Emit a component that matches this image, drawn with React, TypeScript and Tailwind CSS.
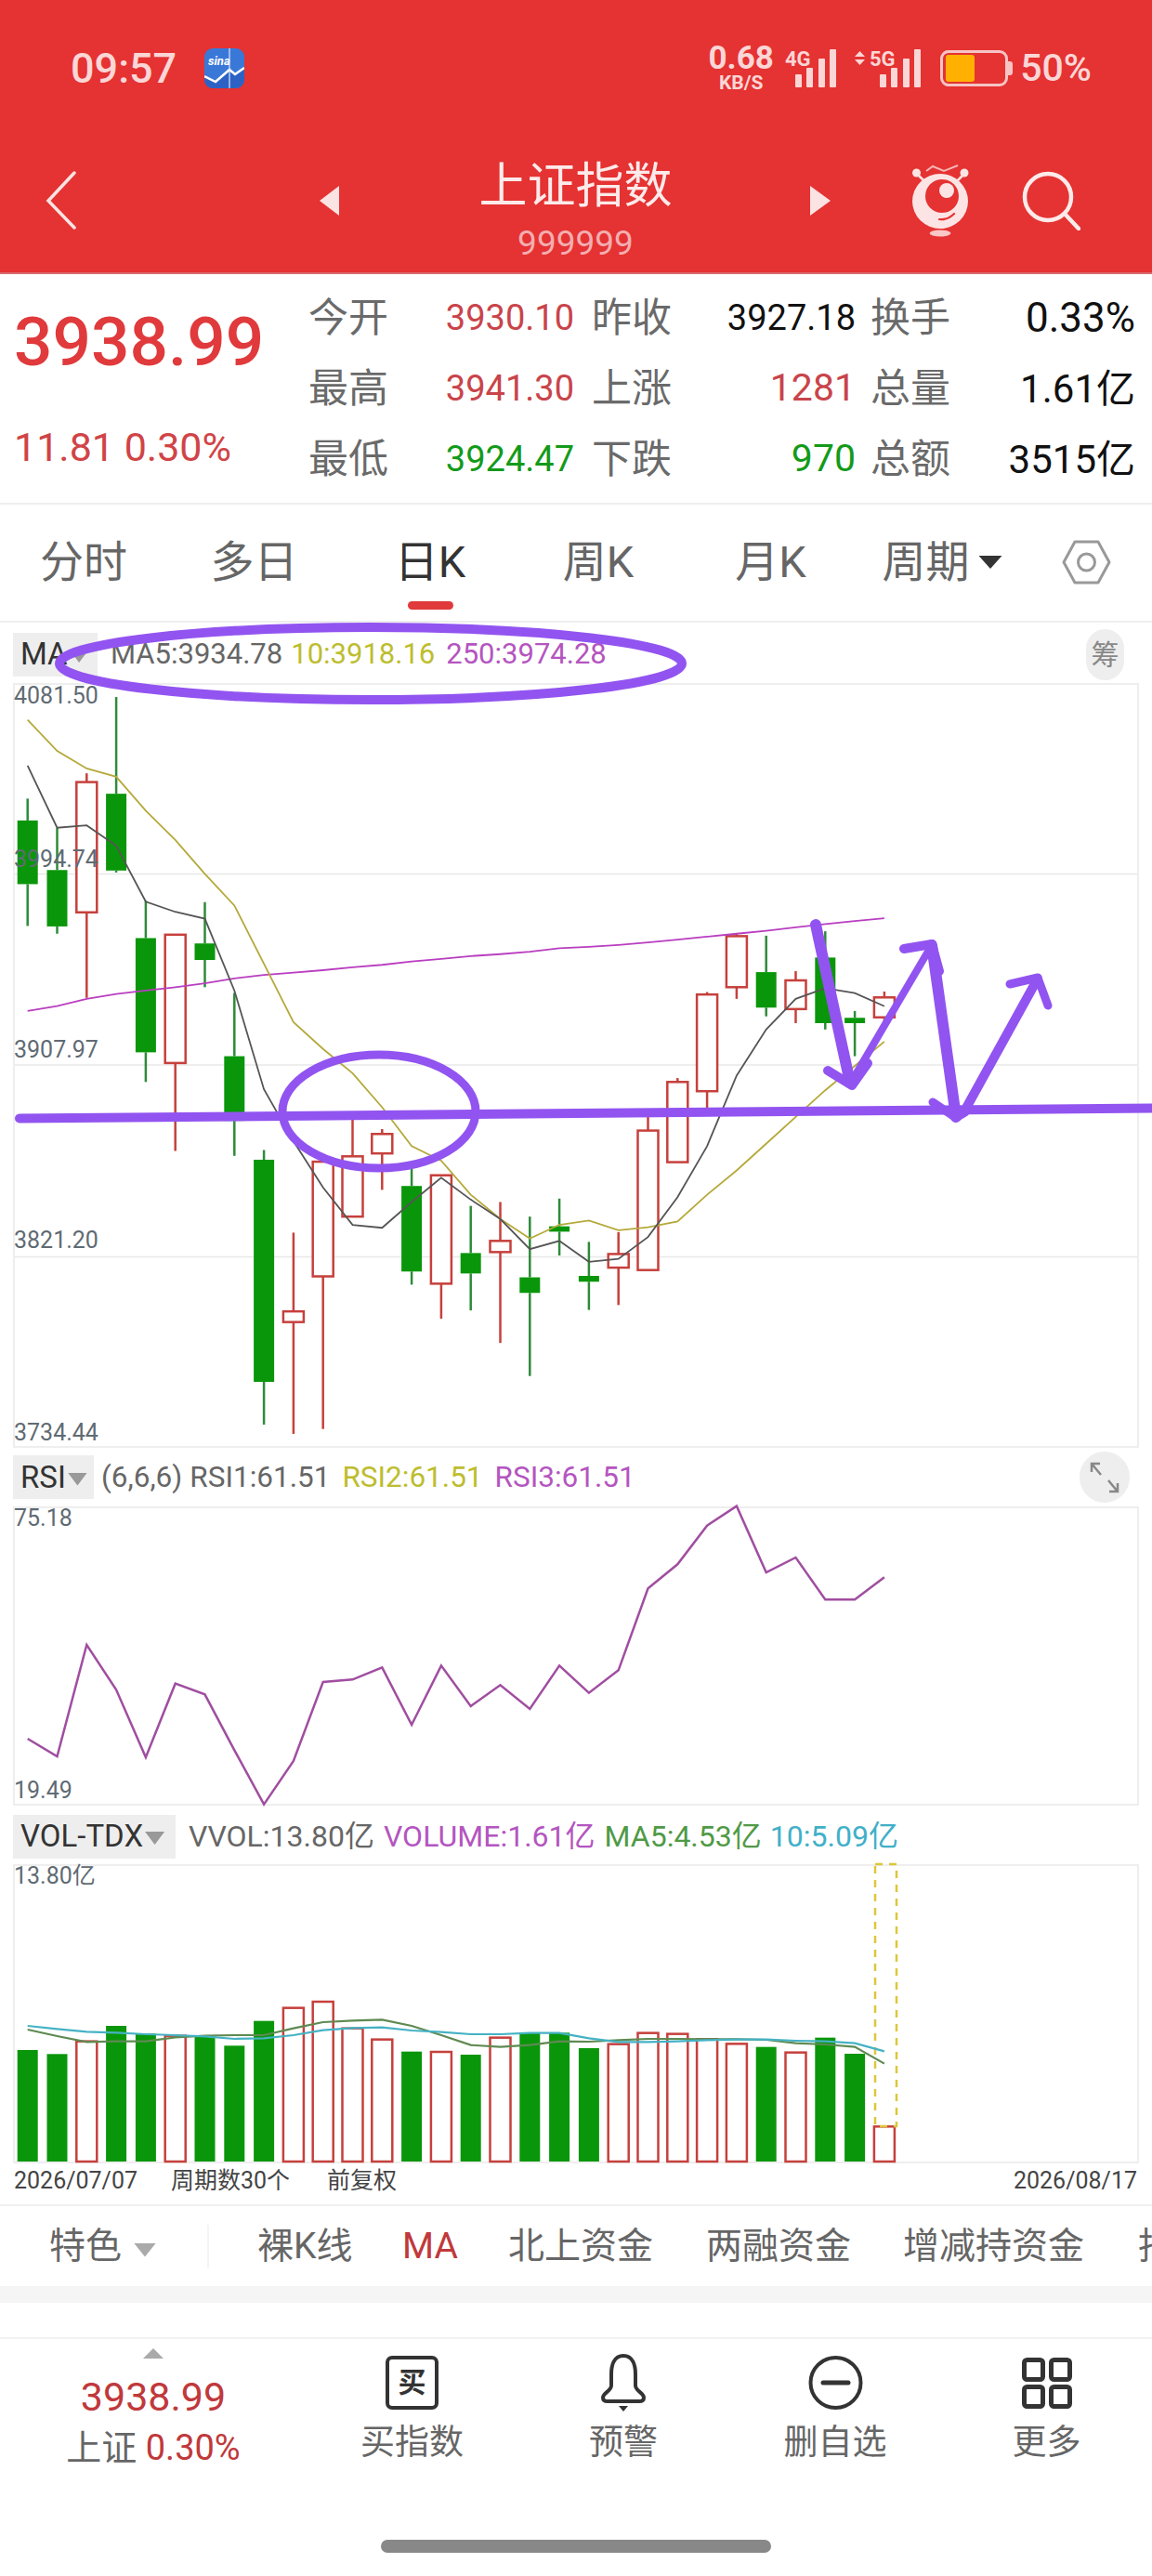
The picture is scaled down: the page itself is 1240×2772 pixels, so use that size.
import React from "react";

const GREEN = "#0a960a";
const RED = "#c6403c";
const cx = (i: number) => 29.7 + 31.8 * i;
const ky = (z: number) => 760 + z / 1.912;
const ry = (z: number) => 1560 + z / 3;
const vy = (z: number) => 1960 + z / 3;

const candles: [number, number, number, number, number][] = [
  [0, 190, 235, 366, 452], [0, 250, 337, 453, 468], [1, 138, 156, 424, 600], [0, -19, 180, 338, 342],
  [0, 400, 477, 712, 773], [1, 470, 470, 734, 915], [0, 403, 488, 522, 578], [0, 590, 720, 853, 925],
  [0, 913, 933, 1390, 1478], [1, 1083, 1245, 1267, 1497], [1, 937, 937, 1173, 1487], [1, 848, 926, 1050, 1050],
  [1, 870, 880, 920, 995], [0, 950, 987, 1163, 1190], [1, 965, 965, 1188, 1260], [0, 1028, 1125, 1167, 1243],
  [1, 1020, 1100, 1123, 1310], [0, 1050, 1175, 1207, 1378], [0, 1013, 1070, 1081, 1130], [0, 1102, 1172, 1184, 1242],
  [1, 1082, 1127, 1155, 1232], [1, 845, 873, 1160, 1160], [1, 765, 773, 938, 938], [1, 588, 593, 792, 830],
  [1, 468, 473, 578, 602], [0, 472, 547, 620, 638], [1, 545, 564, 623, 652], [0, 463, 517, 652, 665],
  [0, 627, 641, 652, 720], [1, 587, 599, 640, 666],
];
const ma5 = [122, 250, 245, 287, 402, 423, 437, 585, 788, 895, 990, 1067, 1073, 1020, 970, 1015, 1055, 1117, 1100, 1143, 1137, 1092, 1010, 905, 760, 665, 602, 580, 590, 617];
const ma10 = [28, 92, 128, 145, 215, 275, 345, 410, 530, 650, 705, 755, 825, 905, 935, 1005, 1055, 1095, 1067, 1058, 1078, 1072, 1060, 1005, 955, 900, 845, 790, 740, 690];
const ma250 = [627, 617, 602, 592, 585, 578, 570, 560, 553, 548, 543, 537, 532, 525, 520, 514, 510, 505, 498, 495, 491, 486, 480, 474, 468, 462, 455, 448, 442, 436];
const rsi = [933, 990, 630, 775, 993, 755, 790, 970, 1145, 1005, 750, 742, 703, 888, 697, 828, 760, 837, 697, 785, 712, 448, 370, 245, 182, 396, 348, 484, 484, 412];
const bars: [number, number][] = [
  [0, 738], [0, 751], [1, 710], [0, 660], [0, 685], [1, 692], [0, 690], [0, 724], [0, 644], [1, 602],
  [1, 582], [1, 668], [1, 704], [0, 743], [1, 744], [0, 753], [1, 698], [0, 684], [0, 682], [0, 732],
  [1, 719], [1, 683], [1, 686], [1, 703], [1, 718], [0, 728], [1, 746], [0, 698], [0, 750], [1, 985],
];
const volG = [672, 693, 712, 710, 710, 697, 692, 690, 690, 668, 648, 643, 640, 660, 690, 722, 728, 722, 710, 711, 706, 702, 702, 703, 703, 705, 716, 720, 728, 782];
const volB = [660, 670, 679, 682, 687, 690, 694, 702, 700, 690, 674, 667, 665, 675, 680, 687, 687, 683, 683, 700, 712, 712, 710, 706, 704, 704, 708, 710, 716, 742];

const pts = (a: number[], f: (z: number) => number) => a.map((z, i) => `${cx(i)},${f(z)}`).join(" ");

function Tri({ className }: { className: string }) {
  return <div className={className} style={{ clipPath: "polygon(0 0,100% 0,50% 100%)" }} />;
}

function Quote({ label, value, color, pad, size }: { label: string; value: string; color: string; pad?: string; size?: string }) {
  return (
    <>
      <div className={`flex items-center text-[43px] text-[#6a6a6a] whitespace-nowrap ${pad ?? ""}`}>{label}</div>
      <div className={`flex items-center justify-end whitespace-nowrap ${size ?? "text-[38px]"} ${color}`}>{value}</div>
    </>
  );
}

function Signal({ label, arrows }: { label: string; arrows?: boolean }) {
  const ox = arrows ? 16 : 1;
  const bx = arrows ? 27 : 12;
  const w = arrows ? 71 : 56;
  return (
    <svg width={w} height="44" viewBox={`0 0 ${w} 44`} className="block">
      {arrows && <path d="M5.5 4 L11 10 L0 10 Z M0 13 L11 13 L5.5 19 Z" fill="#fbd6d6" />}
      <text x={ox} y="20" fontSize="22" fontWeight="700" fill="#fbd6d6" fontFamily="Roboto">{label}</text>
      {[[0, 29], [12, 22], [25, 12], [37, 2]].map(([x, y]) => (
        <rect key={x} x={x + bx} y={y} width="7" height={43 - y} fill="#fbd6d6" rx="1" />
      ))}
    </svg>
  );
}

function Dropdown({ label, width }: { label: string; width: string }) {
  return (
    <div className={`flex items-center justify-start pl-[8px] h-[47px] bg-[#eeeeee] flex-none text-[33px] text-[#333] whitespace-nowrap ${width}`}>
      <span>{label}</span>
      <Tri className="w-[21px] h-[14px] ml-[2px] mt-[4px] bg-[#999] flex-none" />
    </div>
  );
}

const chartBox = "relative ml-[14px] w-[1212px] border-2 border-[#eeeeee] bg-white";
const axis = "absolute left-[-1px] text-[25px] leading-[28px] text-[#5f6b73] whitespace-nowrap";

export default function App() {
  return (
    <div className="relative w-[1240px] h-[2772px] overflow-hidden bg-white [font-family:Roboto,'Noto_Sans_CJK_SC',sans-serif]">
      {/* Red header */}
      <header className="h-[295px] bg-[#e53232] border-b-2 border-[#d9696a]">
        <div className="h-[146px] flex items-center pl-[76px] pr-[65px] text-[#fbd6d6]">
          <span className="text-[45px] font-medium leading-none w-[116px]">09:57</span>
          <div className="relative ml-[28px] w-[43px] h-[43px] rounded-[9px] bg-[#3a78d8] overflow-hidden">
            <span className="absolute left-[4px] top-[7px] text-[13px] italic font-bold text-white leading-none">sina</span>
            <svg className="absolute inset-0" viewBox="0 0 43 43" width="43" height="43">
              <path d="M0 30 L12 36 L27 23 L33 28 L43 21 V43 H0 Z" fill="#2d62c4" />
              <polyline points="0,30 12,36 27,23 33,28 43,21" fill="none" stroke="#fff" strokeWidth="2.5" />
              <line x1="27" y1="0" x2="27" y2="43" stroke="#dfeaff" strokeWidth="1.2" />
            </svg>
          </div>
          <div className="ml-auto flex items-center">
            <div className="w-[69px] flex flex-col items-center font-bold">
              <span className="text-[35px] leading-[30px]">0.68</span>
              <span className="text-[21px] leading-[18px] mt-[2px]">KB/S</span>
            </div>
            <div className="ml-[12px]"><Signal label="4G" /></div>
            <div className="ml-[20px]"><Signal label="5G" arrows /></div>
            <div className="relative ml-[21px] w-[78px] h-[39px]">
              <div className="absolute left-0 top-0 w-[73px] h-[39px] rounded-[9px] border-[3px] border-[#f6c4c4]" />
              <div className="absolute right-0 top-[12px] w-[5px] h-[15px] rounded-r-[3px] bg-[#f6c4c4]" />
              <div className="absolute left-[6px] top-[5px] w-[31px] h-[29px] rounded-[3px] bg-[#ffb000]" />
            </div>
            <span className="ml-[8px] text-[41px] font-medium leading-none">50%</span>
          </div>
        </div>
        <div className="h-[147px] flex items-center pb-[8px] pl-[49px]">
          <svg width="33" height="63" viewBox="0 0 33 63" className="flex-none">
            <polyline points="31,2 3,32 31,61" fill="none" stroke="#fbe3e3" strokeWidth="3.5" strokeLinecap="round" />
          </svg>
          <svg width="21" height="32" viewBox="0 0 21 32" className="flex-none ml-[262px]"><path d="M21 0 V32 L0 16 Z" fill="#fbe3e3" /></svg>
          <div className="w-[507px] flex-none self-start pl-[2px] pt-[25px] text-center">
            <div className="text-[52px] leading-[60px] text-[#fdeaea]">上证指数</div>
            <div className="text-[37px] leading-[40px] mt-[11px] text-[#f3aeb0]">999999</div>
          </div>
          <svg width="22" height="32" viewBox="0 0 22 32" className="flex-none"><path d="M0 0 V32 L22 16 Z" fill="#fbe3e3" /></svg>
          <svg width="61" height="78" viewBox="0 0 61 78" className="flex-none ml-[88px]">
            <polyline points="15,7 22,2 34,7 49,1" fill="none" stroke="#f6b4b4" strokeWidth="2" />
            <circle cx="4.5" cy="9" r="4.5" fill="#fde4e4" />
            <circle cx="56" cy="9" r="4.5" fill="#fde4e4" />
            <path d="M6 11 L13 18 M55 11 L48 18" stroke="#fde4e4" strokeWidth="2.5" />
            <ellipse cx="30" cy="39.5" rx="30" ry="29.5" fill="#fde4e4" />
            <circle cx="32" cy="34" r="18" fill="#e53232" />
            <circle cx="37" cy="28" r="8" fill="#fde4e4" />
            <path d="M29 59 Q38 60 45 53" fill="none" stroke="#e53232" strokeWidth="2.2" strokeLinecap="round" />
            <ellipse cx="30" cy="74" rx="11.5" ry="3.5" fill="#fbc6c6" />
          </svg>
          <svg width="63" height="64" viewBox="0 0 63 64" className="flex-none ml-[57px]">
            <circle cx="28" cy="28" r="25" fill="none" stroke="#fdeaea" strokeWidth="4.5" />
            <line x1="46" y1="46" x2="61" y2="62" stroke="#fdeaea" strokeWidth="4.5" strokeLinecap="round" />
          </svg>
        </div>
      </header>

      {/* Quote panel */}
      <section className="h-[248px] border-b-2 border-[#eeeeee] flex">
        <div className="w-[332px] flex-none pl-[15px] pt-[33px]">
          <div className="text-[73px] leading-[80px] font-medium text-[#e03a3c] whitespace-nowrap">3938.99</div>
          <div className="mt-[52px] text-[43px] leading-[42px] text-[#d04447] whitespace-nowrap">11.81 0.30%</div>
        </div>
        <div className="mt-[9px] grid grid-cols-[87px_199px_106px_197px_103px_198px] auto-rows-[76px] self-start">
          <Quote label="今开" value="3930.10" color="text-[#c9444a]" />
          <Quote label="昨收" value="3927.18" color="text-[#111]" pad="pl-[19px]" />
          <Quote label="换手" value="0.33%" color="text-[#111]" pad="pl-[16px]" size="text-[44px]" />
          <Quote label="最高" value="3941.30" color="text-[#c9444a]" />
          <Quote label="上涨" value="1281" color="text-[#c9444a]" pad="pl-[19px]" size="text-[41px]" />
          <Quote label="总量" value="1.61亿" color="text-[#111]" pad="pl-[16px]" size="text-[42px]" />
          <Quote label="最低" value="3924.47" color="text-[#139a1a]" />
          <Quote label="下跌" value="970" color="text-[#139a1a]" pad="pl-[19px]" size="text-[41px]" />
          <Quote label="总额" value="3515亿" color="text-[#111]" pad="pl-[16px]" size="text-[42px]" />
        </div>
      </section>

      {/* Tabs */}
      <nav className="h-[127px] border-b-2 border-[#eeeeee] grid grid-cols-[180px_187px_192px_170px_201px_168px_142px] text-[47px] leading-[54px] text-[#666]">
        {["分时", "多日"].map((t) => (
          <div key={t} className="pt-[35px] text-center">{t}</div>
        ))}
        <div className="pt-[35px] flex flex-col items-center text-[#333]">
          <span className="h-[54px]">日K</span>
          <div className="mt-[15px] w-[49px] h-[9px] rounded-full bg-[#e03a3c]" />
        </div>
        <div className="pt-[35px] text-center">周K</div>
        <div className="pt-[35px] text-center">月K</div>
        <div className="pt-[35px] flex justify-center items-start">
          <span>周期</span>
          <Tri className="w-[25px] h-[14px] bg-[#333] ml-[10px] mt-[20px]" />
        </div>
        <div className="pt-[38px] flex justify-center items-start">
          <svg width="53" height="48" viewBox="0 0 53 48">
            <path d="M14 2 H39 L51 24 L39 46 H14 L2 24 Z" fill="none" stroke="#999" strokeWidth="3" strokeLinejoin="round" />
            <circle cx="26.5" cy="24" r="9" fill="none" stroke="#999" strokeWidth="3" />
          </svg>
        </div>
      </nav>

      {/* MA legend */}
      <div className="h-[65px] pt-[3px] pl-[14px] pr-[30px] flex items-center text-[31px] whitespace-nowrap">
        <Dropdown label="MA" width="w-[91px]" />
        <span className="ml-[14px] text-[#666]">MA5:3934.78</span>
        <span className="ml-[9px] text-[#bdbd2e]">10:3918.16</span>
        <span className="ml-[12px] text-[#b455c0]">250:3974.28</span>
        <div className="ml-auto w-[41px] h-[55px] rounded-full bg-[#eeeeee] flex items-center justify-center text-[30px] text-[#888]">筹</div>
      </div>

      {/* Candle chart */}
      <div className={`${chartBox} h-[823px]`}>
        <svg className="absolute inset-0 block overflow-visible" width="1208" height="819" viewBox="16 737 1208 819">
          {[940.4, 1146, 1352.6].map((y) => (
            <line key={y} x1="16" x2="1224" y1={y} y2={y} stroke="#e8e8e8" strokeWidth="1.5" />
          ))}
          {candles.map(([up, wt, bt, bb, wb], i) => {
            const x = cx(i);
            const col = up ? RED : "#2e8b3a";
            return (
              <g key={i}>
                <line x1={x} x2={x} y1={ky(wt)} y2={ky(bt)} stroke={col} strokeWidth="2.5" />
                <line x1={x} x2={x} y1={ky(bb)} y2={ky(wb)} stroke={col} strokeWidth="2.5" />
                {up ? (
                  <rect x={x - 11} y={ky(bt)} width="22" height={ky(bb) - ky(bt)} fill="#fff" stroke={RED} strokeWidth="2.5" />
                ) : (
                  <rect x={x - 11} y={ky(bt)} width="22" height={ky(bb) - ky(bt)} fill={GREEN} />
                )}
              </g>
            );
          })}
          <polyline points={pts(ma250, ky)} fill="none" stroke="#b93ec0" strokeWidth="1.8" />
          <polyline points={pts(ma10, ky)} fill="none" stroke="#b5a93a" strokeWidth="1.8" />
          <polyline points={pts(ma5, ky)} fill="none" stroke="#555" strokeWidth="1.8" />
        </svg>
        <span className={`${axis} top-[-2px]`}>4081.50</span>
        <span className={`${axis} top-[174px]`}>3994.74</span>
        <span className={`${axis} top-[379px]`}>3907.97</span>
        <span className={`${axis} top-[584px]`}>3821.20</span>
        <span className={`${axis} top-[791px]`}>3734.44</span>
      </div>

      {/* RSI legend */}
      <div className="h-[63px] pl-[14px] pr-[24px] flex items-center text-[31.5px] whitespace-nowrap">
        <Dropdown label="RSI" width="w-[87px]" />
        <span className="ml-[8px] text-[#666]">(6,6,6)</span>
        <span className="ml-[8px] text-[#666]">RSI1:61.51</span>
        <span className="ml-[13px] text-[#bdbd2e]">RSI2:61.51</span>
        <span className="ml-[13px] text-[#b455c0]">RSI3:61.51</span>
        <div className="ml-auto w-[54px] h-[55px] rounded-full bg-[#eeeeee] flex items-center justify-center">
          <svg width="34" height="36" viewBox="0 0 34 36" fill="none" stroke="#888" strokeWidth="2.5">
            <path d="M3 12 V3 H12 M3 3 L13 15 M31 24 V33 H22 M31 33 L21 21" />
          </svg>
        </div>
      </div>

      {/* RSI chart */}
      <div className={`${chartBox} h-[322px]`}>
        <svg className="absolute inset-0 block overflow-visible" width="1208" height="318" viewBox="16 1623 1208 318">
          <polyline points={pts(rsi, ry)} fill="none" stroke="#a04ea0" strokeWidth="2.5" />
        </svg>
        <span className={`${axis} top-[-3px]`}>75.18</span>
        <span className={`${axis} top-[290px]`}>19.49</span>
      </div>

      {/* VOL legend */}
      <div className="h-[63px] pt-[3px] pl-[14px] flex items-center text-[32px] whitespace-nowrap">
        <Dropdown label="VOL-TDX" width="w-[175px]" />
        <span className="ml-[14px] text-[#666]">VVOL:13.80亿</span>
        <span className="ml-[10px] text-[#b455c0]">VOLUME:1.61亿</span>
        <span className="ml-[10px] text-[#4f9a45]">MA5:4.53亿</span>
        <span className="ml-[9px] text-[#3fb0c8]">10:5.09亿</span>
      </div>

      {/* VOL chart */}
      <div className={`${chartBox} h-[322px]`}>
        <svg className="absolute inset-0 block overflow-visible" width="1208" height="318" viewBox="16 2008 1208 318">
          {bars.map(([up, top], i) => {
            const x = cx(i);
            return up ? (
              <rect key={i} x={x - 11} y={vy(top)} width="22" height={2326 - vy(top)} fill="#fff" stroke={RED} strokeWidth="2.5" />
            ) : (
              <rect key={i} x={x - 11} y={vy(top)} width="22" height={2326 - vy(top)} fill={GREEN} />
            );
          })}
          <rect x="942" y="2006" width="23" height="282" fill="none" stroke="#dcc73a" strokeWidth="2.5" strokeDasharray="8 7" />
          <polyline points={pts(volG, vy)} fill="none" stroke="#5e8a52" strokeWidth="2.2" />
          <polyline points={pts(volB, vy)} fill="none" stroke="#45b2c4" strokeWidth="2.2" />
        </svg>
        <span className={`${axis} top-[-3px]`}>13.80亿</span>
      </div>

      {/* Date row */}
      <div className="h-[44px] pb-[6px] flex items-center pl-[15px] pr-[16px] text-[25px] text-[#444] whitespace-nowrap">
        <span className="w-[169px] flex-none">2026/07/07</span>
        <span className="w-[168px] flex-none">周期数30个</span>
        <span>前复权</span>
        <span className="ml-auto">2026/08/17</span>
      </div>

      {/* Feature strip */}
      <div className="h-[88px] border-t-2 border-[#f0f0f0] flex items-center pl-[53px] text-[39px] text-[#666] whitespace-nowrap overflow-hidden">
        <span className="w-[75px] flex-none">特色</span>
        <Tri className="w-[24px] h-[15px] ml-[16px] mt-[8px] bg-[#aaa] flex-none" />
        <div className="w-[2px] h-[47px] ml-[55px] bg-[#f4f4f4] flex-none" />
        <span className="ml-[52px] w-[104px] flex-none">裸K线</span>
        <span className="ml-[52px] w-[61px] flex-none text-[#c0393b]">MA</span>
        <span className="ml-[53px] w-[158px] flex-none">北上资金</span>
        <span className="ml-[55px] w-[158px] flex-none">两融资金</span>
        <span className="ml-[54px] w-[196px] flex-none">增减持资金</span>
        <span className="ml-[57px] flex-none">指标</span>
      </div>

      {/* Gray band + spacer */}
      <div className="h-[18px] bg-[#f5f5f5]" />
      <div className="h-[37px]" />

      {/* Bottom nav */}
      <div className="border-t-2 border-[#f2f2f2] grid grid-cols-[330px_227px_228px_228px_227px]">
        <div className="flex flex-col items-center pt-[10px]">
          <div className="w-[22px] h-[11px] bg-[#aaa]" style={{ clipPath: "polygon(50% 0,100% 100%,0 100%)" }} />
          <div className="mt-[18px] text-[43px] leading-[46px] text-[#c0393b]">3938.99</div>
          <div className="mt-[9px] text-[38px] leading-[46px] text-[#666] whitespace-nowrap">
            上证 <span className="text-[#c0393b]">0.30%</span>
          </div>
        </div>
        <div className="flex flex-col items-center pt-[18px]">
          <div className="w-[57px] h-[58px] rounded-[7px] border-[4px] border-[#333] flex items-center justify-center text-[30px] font-bold leading-none text-[#333]">买</div>
          <div className="mt-[13px] text-[37px] leading-[46px] text-[#666]">买指数</div>
        </div>
        <div className="flex flex-col items-center pt-[16px]">
          <svg width="50" height="62" viewBox="0 0 50 62" fill="none" stroke="#333" strokeWidth="4">
            <path d="M25 2 C15 2 12 12 12 22 V34 C12 40 3 42 3 47 C3 50 5 51 8 51 H42 C45 51 47 50 47 47 C47 42 38 40 38 34 V22 C38 12 35 2 25 2 Z" strokeLinejoin="round" />
            <path d="M20 56 H30 L25 62 Z" fill="#333" stroke="none" />
          </svg>
          <div className="mt-[11px] text-[37px] leading-[46px] text-[#666]">预警</div>
        </div>
        <div className="flex flex-col items-center pt-[18px]">
          <svg width="59" height="58" viewBox="0 0 59 58" fill="none" stroke="#333" strokeWidth="4">
            <circle cx="29.5" cy="29" r="27" />
            <line x1="16" y1="29" x2="43" y2="29" strokeWidth="5" strokeLinecap="round" />
          </svg>
          <div className="mt-[13px] text-[37px] leading-[46px] text-[#666]">删自选</div>
        </div>
        <div className="flex flex-col items-center pt-[20px]">
          <svg width="54" height="55" viewBox="0 0 54 55" fill="none" stroke="#333" strokeWidth="5">
            <rect x="2.5" y="2.5" width="20" height="21" rx="3" />
            <rect x="31.5" y="2.5" width="20" height="21" rx="3" />
            <rect x="2.5" y="31.5" width="20" height="21" rx="3" />
            <rect x="31.5" y="31.5" width="20" height="21" rx="3" />
          </svg>
          <div className="mt-[14px] text-[37px] leading-[46px] text-[#666]">更多</div>
        </div>
      </div>

      {/* Home indicator */}
      <div className="absolute left-[410px] top-[2733px] w-[420px] h-[14px] rounded-full bg-[#888888]" />

      {/* Hand-drawn annotations */}
      <svg className="absolute inset-0 pointer-events-none" width="1240" height="2772" viewBox="0 0 1240 2772" fill="none" stroke="#9254f0" strokeLinecap="round" strokeLinejoin="round">
        <ellipse cx="399" cy="714" rx="335" ry="39" strokeWidth="10" />
        <ellipse cx="408" cy="1196" rx="104" ry="61" strokeWidth="9" />
        <line x1="21" y1="1203.5" x2="1240" y2="1192.5" strokeWidth="10" />
        <polyline points="878,995 915,1165" strokeWidth="12" />
        <polyline points="891,1152 917,1168 934,1144" strokeWidth="10" />
        <polyline points="917,1163 1003,1017" strokeWidth="8" />
        <polyline points="973,1021 1003,1016 1011,1045" strokeWidth="10" />
        <polyline points="1003,1017 1029,1202" strokeWidth="12" />
        <polyline points="1004,1186 1029,1203 1039,1197" strokeWidth="9" />
        <polyline points="1039,1194 1117,1053" strokeWidth="10" />
        <polyline points="1087,1059 1117,1052 1128,1082" strokeWidth="9" />
      </svg>
    </div>
  );
}
